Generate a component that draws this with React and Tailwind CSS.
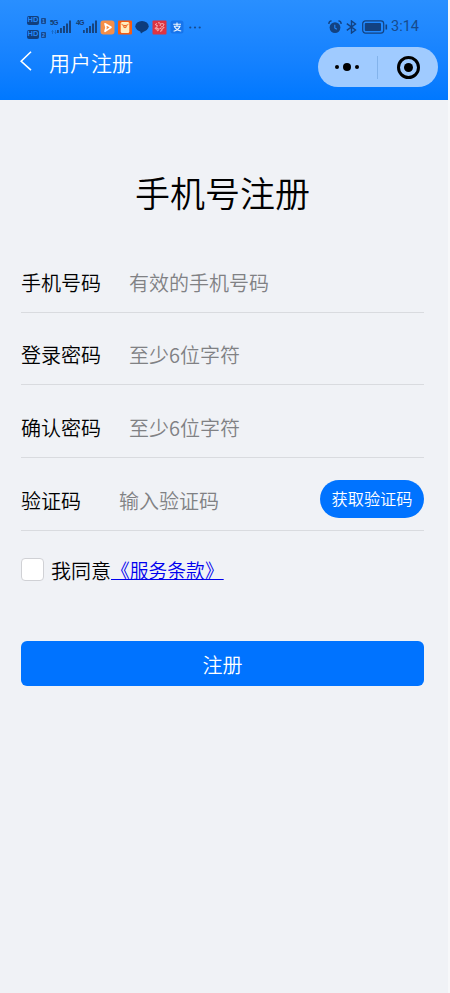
const fields = [
  { label: '手机号码', placeholder: '有效的手机号码' },
  { label: '登录密码', placeholder: '至少6位字符' },
  { label: '确认密码', placeholder: '至少6位字符' },
];

const HdBadge = ({ sim }) => (
  <div className="flex h-[9px] items-center gap-[2px]">
    <span className="flex h-[9px] w-[12px] items-center justify-center rounded-[2px] bg-[#123f7d] font-['Liberation_Sans'] text-[7.5px] leading-none font-bold text-[#2489fb]">
      HD
    </span>
    <span className="mt-[2px] flex h-[6px] w-[5px] items-center justify-center rounded-[1px] bg-[#174a8f] font-['Liberation_Sans'] text-[5px] leading-none font-bold text-[#3d93f5]">
      {sim}
    </span>
  </div>
);

const Signal = ({ type, arrows }) => (
  <div className="flex h-[16px] w-[22px]">
    <div className="flex w-[7px] flex-col">
      <span className="font-['Liberation_Sans'] text-[7px] leading-[8px] font-bold tracking-[-0.8px] text-[#163c70]">
        {type}
      </span>
      {arrows && (
        <svg className="mt-[3px] ml-px" width="6" height="4" viewBox="0 0 6 4" fill="none" stroke="#1763bd" strokeWidth=".8">
          <path d="M1.5 4V.5M.5 1.5l1-1 1 1M4.5 0v3.5M3.5 2.5l1 1 1-1" />
        </svg>
      )}
    </div>
    <svg className="mt-px" width="15" height="14" viewBox="0 0 15 14" fill="#17447f">
      <rect x="0" y="10" width="1.8" height="3" />
      <rect x="3" y="8" width="1.9" height="5" />
      <rect x="6" y="6" width="2" height="7" />
      <rect x="9" y="3.5" width="2" height="9.5" />
      <rect x="12" y="0.5" width="2" height="12.5" />
    </svg>
  </div>
);

const AppIcons = () => (
  <div className="ml-[2px] flex items-center gap-[3px]">
    <svg width="15" height="15" viewBox="0 0 15 15">
      <rect x=".5" y=".5" width="14" height="14" rx="3" fill="#f58e47" />
      <path d="M5 3.8 11 7.3 5 11.3 6 7.5Z" fill="#f58e47" stroke="#fff" strokeWidth="1.6" strokeLinejoin="round" />
    </svg>
    <svg width="14" height="15" viewBox="0 0 14 15">
      <rect y=".5" width="14" height="14" rx="1" fill="#f65b10" />
      <rect x="2.7" y="2" width="8.6" height="11" rx="1.5" fill="#ffedc0" />
      <path d="M3.5 4.2C5 6 9 6 10.5 4.2" fill="none" stroke="#f0641f" strokeWidth="1" />
      <circle cx="7" cy="6.6" r="1.7" fill="#f0641f" />
      <circle cx="7" cy="6.6" r=".7" fill="#ffedc0" />
    </svg>
    <svg width="14" height="14" viewBox="0 0 14 14" fill="#0d3c7c">
      <ellipse cx="7" cy="6.2" rx="6.7" ry="5.3" />
      <path d="M5 10.8 11.5 9.5 6 13.6Z" />
    </svg>
    <svg width="15" height="15" viewBox="0 0 15 15">
      <rect x=".5" y=".5" width="14" height="14" rx="1" fill="#dd3442" />
      <g fill="none" stroke="#ffd0ce" strokeWidth=".9">
        <path d="M6 3c2-1 3 1 2 3M9 4c2-1 4 0 2 2M9 7c3-1 4 1 1 2M8 8c3 1 2 4 0 3M7 8c0 3-2 4-2 1M6 8c-3 2-4 0-1-1M6 6C3 6 3 3 5 4" />
      </g>
    </svg>
    <svg width="14" height="14" viewBox="0 0 14 14">
      <rect x=".5" y=".5" width="13" height="13" rx="2.5" fill="#1674ec" />
      <path d="M3.2 4.2h7.8M7 2.4v3.6M3.8 6.2h6.2c-1 2.6-3.4 4.2-6.4 5M4.3 6.4c1.3 2.3 3.6 3.9 6.9 4.6" fill="none" stroke="#eef6ff" strokeWidth="1.1" />
    </svg>
    <svg className="ml-[2px]" width="12" height="3" viewBox="0 0 12 3" fill="#174c90">
      <circle cx="1.3" cy="1.5" r="1.1" />
      <circle cx="6" cy="1.5" r="1.1" />
      <circle cx="10.7" cy="1.5" r="1.1" />
    </svg>
  </div>
);

const AlarmIcon = () => (
  <svg width="14" height="14" viewBox="0 0 14 14">
    <circle cx="7" cy="7.6" r="5.4" fill="#134281" />
    <path d="M.9 4C.8 2.3 2 1 3.6.9M13.1 4C13.2 2.3 12 1 10.4.9" fill="none" stroke="#134281" strokeWidth="1.4" />
    <path d="M6.8 4.8v3.1l2 1.3" fill="none" stroke="#2388fb" strokeWidth="1.1" />
  </svg>
);

const BluetoothIcon = () => (
  <svg className="ml-[4px]" width="11" height="14" viewBox="0 0 11 14" fill="none" stroke="#134281" strokeWidth="1.4">
    <path d="M.8 3.6 9.5 10 5.5 13V1l4 3L.8 10.4" />
  </svg>
);

const StatusBar = () => (
  <div className="flex h-[26px] items-center justify-between pr-[29px] pl-[27px]">
    <div className="flex items-center">
      <div className="flex flex-col gap-[5px]">
        <HdBadge sim="1" />
        <HdBadge sim="2" />
      </div>
      <div className="ml-[4px] flex gap-[4px]">
        <Signal type="5G" arrows />
        <Signal type="4G" />
      </div>
      <AppIcons />
    </div>
    <div className="flex items-center">
      <AlarmIcon />
      <BluetoothIcon />
      <svg className="ml-[5px]" width="26" height="14" viewBox="0 0 26 14">
        <rect x=".7" y=".9" width="21" height="12.2" rx="2.8" fill="none" stroke="#134281" strokeWidth="1.2" />
        <rect x="2.8" y="3" width="16.2" height="8" rx="1" fill="#134281" />
        <path d="M24.3 4.5v5" stroke="#134281" strokeWidth="1.6" />
      </svg>
      <span className="ml-[3px] pt-px font-[Roboto] text-[14.5px] leading-none font-normal text-[#174a8d]">3:14</span>
    </div>
  </div>
);

const Header = () => (
  <header className="h-[100px] bg-gradient-to-b from-[#298fff] to-[#0078ff] pt-[14px]">
    <StatusBar />
    <div className="mt-[7px] flex h-[40px] items-center justify-between pr-[10px] pl-[20px]">
      <div className="flex items-center pb-[12px]">
        <svg width="12" height="20" viewBox="0 0 12 20" fill="none" stroke="#fff" strokeWidth="1.6">
          <path d="M11 .8 1.2 10.3 11 19.2" />
        </svg>
        <h1 className="ml-[17px] pt-px text-[21px] leading-[30px] text-white">用户注册</h1>
      </div>
      <div className="flex h-[40px] w-[120.5px] items-center rounded-full bg-[#a0cbff]">
        <div className="flex w-[59px] items-center justify-center gap-[4px]">
          <span className="size-[4px] rounded-full bg-black" />
          <span className="size-[8px] rounded-full bg-black" />
          <span className="size-[4px] rounded-full bg-black" />
        </div>
        <div className="h-[23px] w-px bg-[#83b3eb]" />
        <div className="flex flex-1 items-center justify-center pl-px">
          <div className="flex size-[23px] items-center justify-center rounded-full border-[3px] border-black">
            <span className="size-[9px] rounded-full bg-black" />
          </div>
        </div>
      </div>
    </div>
  </header>
);

const App = () => {
  return (
    <div className="h-[993px] w-[450px] overflow-hidden bg-[#f7f8fa] font-['Noto_Sans_CJK_SC',sans-serif] font-[350]">
      <div className="h-full w-[448px] bg-[#f0f2f6]">
        <Header />

        <main className="pr-[24px] pl-[21px]">
          <h2 className="pt-[66px] text-center text-[35px] leading-[52px] text-black">手机号注册</h2>

          {/* Form rows */}
          <div className="mt-[22px]">
            {fields.map((field) => (
              <div key={field.label} className="flex h-[72.7px] items-center border-b-[1.5px] border-[#d9dbdf] pt-[13.6px]">
                <label className="w-[108px] text-[20px] leading-[30px] text-black">{field.label}</label>
                <span className="text-[20px] leading-[30px] text-[#808184]">{field.placeholder}</span>
              </div>
            ))}
            <div className="flex h-[72.7px] items-center border-b-[1.5px] border-[#d9dbdf] pt-[10px]">
              <label className="w-[98px] pt-[4px] text-[20px] leading-[30px] text-black">验证码</label>
              <span className="flex-1 pt-[4px] text-[20px] leading-[30px] text-[#808184]">输入验证码</span>
              <button className="h-[38px] w-[104px] rounded-full bg-[#0073ff] pb-[2px] text-[16.2px] text-white">
                获取验证码
              </button>
            </div>
          </div>

          <div className="mt-[24px] flex h-[30px] items-center">
            <span className="size-[23px] rounded-[4px] border border-[#d0d1d5] bg-white" />
            <span className="ml-[7px] pt-[2px] text-[20px] leading-[30px] text-black">我同意</span>
            <a className="text-[18.8px] leading-[30px] text-[#0000ee] underline">《服务条款》</a>
          </div>

          <button className="mt-[56px] h-[45px] w-full rounded-[6px] bg-[#0073ff] pt-[3px] text-[20px] text-white">
            注册
          </button>
        </main>
      </div>
    </div>
  );
};

export default App;
